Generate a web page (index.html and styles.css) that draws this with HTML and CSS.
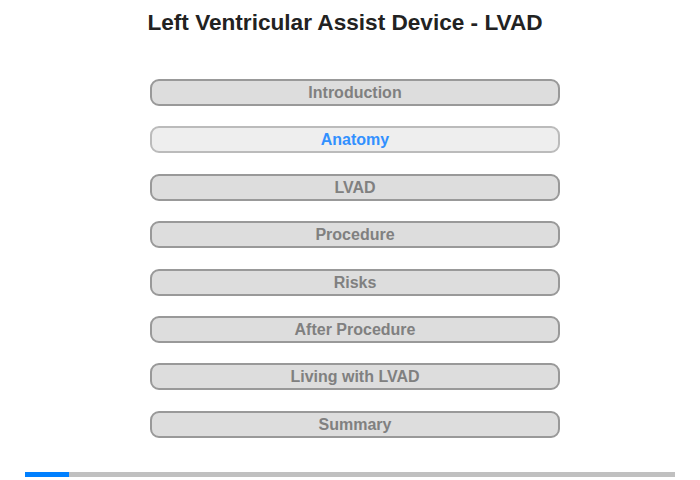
FILE: index.html
```html
<!DOCTYPE html>
<html>
<head>
  <meta charset="UTF-8">
  <title>Left Ventricular Assist Device - LVAD</title>
  <link rel="stylesheet" href="styles.css">
</head>
<body>
  <div class="page">
    <h1 class="title">Left Ventricular Assist Device - LVAD</h1>
    <ul class="menu">
      <li class="item">Introduction</li>
      <li class="item active">Anatomy</li>
      <li class="item">LVAD</li>
      <li class="item">Procedure</li>
      <li class="item">Risks</li>
      <li class="item">After Procedure</li>
      <li class="item">Living with LVAD</li>
      <li class="item">Summary</li>
    </ul>
    <div class="progress">
      <div class="progress-fill" style="width: 44px"></div>
    </div>
  </div>
</body>
</html>
```

FILE: styles.css
```css
html, body, ul, li, h1 {
  padding: 0;
  margin: 0;
  list-style: none;
}
body {
  font-family: "Liberation Sans", Arial, sans-serif;
  background: #fff;
}
.page {
  width: 700px;
  height: 480px;
  display: flex;
  flex-direction: column;
}
.title {
  font-size: 22.6px;
  font-weight: bold;
  color: #222;
  text-align: center;
  padding-right: 10px;
  line-height: 26px;
  margin-top: 10px;
}
.menu {
  display: flex;
  flex-direction: column;
  gap: 20.4px;
  width: 410px;
  margin: 43px 0 0 150px;
}
.item {
  height: 23px;
  line-height: 23px;
  border: 2px solid #999;
  border-radius: 9px;
  background: #ddd;
  color: #808080;
  font-size: 16px;
  font-weight: bold;
  text-align: center;
}
.item.active {
  background: #eee;
  border-color: #bbb;
  color: #3190ff;
}
.progress {
  width: 650px;
  height: 5px;
  margin: auto 0 3px 25px;
  background: #c0c0c0;
}
.progress-fill {
  height: 5px;
  background: #0080ff;
}
```
